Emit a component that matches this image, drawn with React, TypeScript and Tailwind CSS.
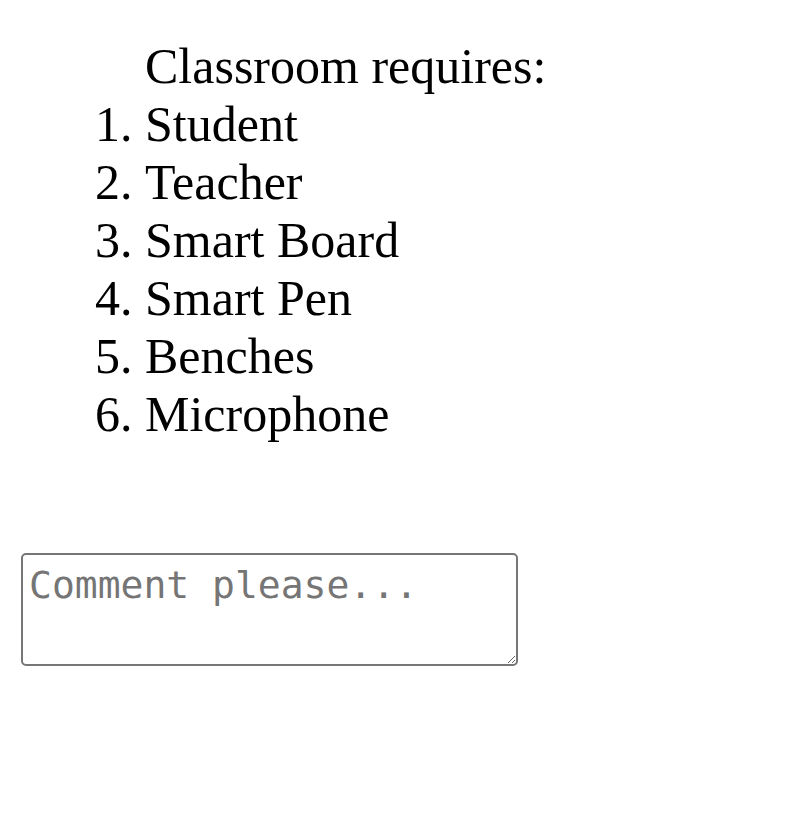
export default function App() {
  return (
    <div className="bg-white w-[803px] h-[826px] px-[20px] pt-[37px] text-black">
      <div className="text-[50px] leading-[58px] [font-family:'Liberation_Serif','Times_New_Roman',serif]">
        <p className="pl-[125px]">Classroom requires:</p>
        <ol className="list-decimal pl-[125px]">
          <li>Student</li>
          <li>Teacher</li>
          <li>Smart Board</li>
          <li>Smart Pen</li>
          <li>Benches</li>
          <li>Microphone</li>
        </ol>
      </div>
      <textarea
        placeholder="Comment please..."
        className="block mt-[110px] ml-[1px] w-[497px] h-[113px] border-2 border-[#767676] rounded-[5px] pl-[6px] pr-[6px] pt-[8px] pb-[3px] text-[38px] leading-[1.164] [font-family:'DejaVu_Sans_Mono',monospace] placeholder:text-[#757575] resize"
      />
    </div>
  );
}
